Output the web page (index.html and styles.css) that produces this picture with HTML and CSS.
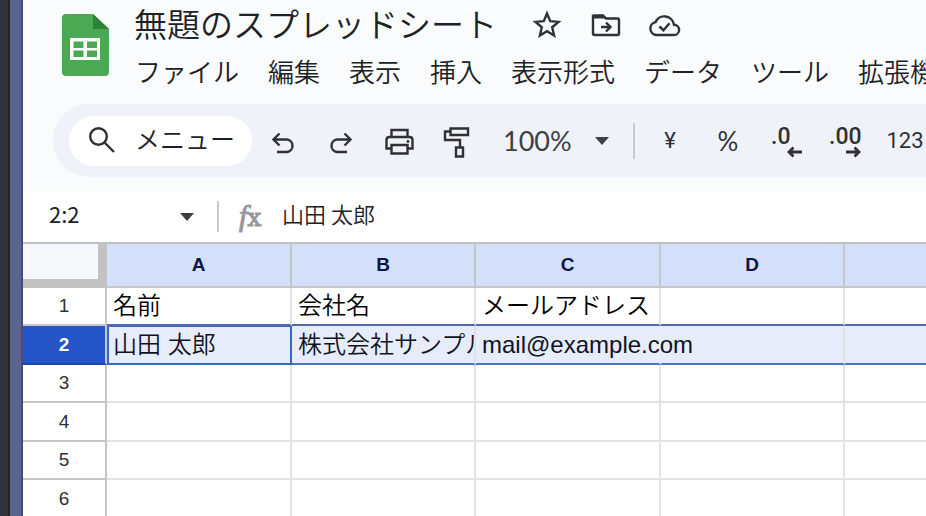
FILE: index.html
```html
<!DOCTYPE html>
<html lang="ja">
<head>
<meta charset="utf-8">
<meta name="viewport" content="width=device-width, initial-scale=1">
<title>無題のスプレッドシート</title>
<link rel="stylesheet" href="styles.css">
</head>
<body>
<div class="window">
  <header class="header">
    <div class="masthead">
      <svg class="logo" viewBox="0 0 47 62" aria-hidden="true">
        <path fill="#4aa952" d="M4 0H31L47 15V58Q47 62 43 62H4Q0 62 0 58V4Q0 0 4 0Z"/>
        <path fill="#2e8236" d="M31 0L47 15H31Z"/>
        <path fill="#fff" fill-rule="evenodd" d="M8 24H38V46H8ZM11.500 27.500V34H21.500V27.500ZM25 27.500V34H35V27.500ZM11.500 36.500V43H21.500V36.500ZM25 36.500V43H35V36.500Z"/>
      </svg>
      <div class="heading">
        <div class="title-row">
          <h1 class="title">無題のスプレッドシート</h1>
          <button class="icon-button" aria-label="スター">
            <svg class="icon" viewBox="0 0 32 32"><path d="M16 4.500L19.200 12.200L27.500 12.900L21.200 18.300L23.100 26.500L16 22.200L8.900 26.500L10.800 18.300L4.500 12.900L12.800 12.200Z"/></svg>
          </button>
          <button class="icon-button" aria-label="移動">
            <svg class="icon" viewBox="0 0 32 32"><path d="M4 7V24.500Q4 26 5.500 26H28.500Q30 26 30 24.500V11Q30 9.500 28.500 9.500H17L14 6.500Z"/><path class="solid" d="M4 5.500H14L18 9.500H4Z"/><path d="M12 18H21M17 13.500L21.500 18L17 22.500"/></svg>
          </button>
          <button class="icon-button" aria-label="保存状態">
            <svg class="icon cloud" viewBox="0 0 34 32"><path d="M9 26H27A5 5 0 0 0 27 15.800A9.700 9.700 0 0 0 8.500 13.200A6.500 6.500 0 0 0 9 26Z"/><path d="M12.500 17.500L16.500 21.200L22.500 14.200"/></svg>
          </button>
        </div>
        <nav class="menus">
          <button>ファイル</button>
          <button>編集</button>
          <button>表示</button>
          <button>挿入</button>
          <button>表示形式</button>
          <button>データ</button>
          <button>ツール</button>
          <button>拡張機能</button>
        </nav>
      </div>
    </div>
    <div class="toolbar">
      <label class="search">
        <svg class="icon" viewBox="0 0 32 32"><circle cx="11.500" cy="11.500" r="8.300"/><path d="M17.500 17.500L27 27"/></svg>
        <input type="text" placeholder="メニュー" aria-label="メニュー">
      </label>
      <button class="tool" aria-label="元に戻す">
        <svg class="icon" viewBox="0 0 32 32"><path d="M10 27H20A6.300 6.300 0 0 0 20 14.500H7M12.500 8.500L6.500 14.500L12.500 20.500"/></svg>
      </button>
      <button class="tool" aria-label="やり直し">
        <svg class="icon" viewBox="0 0 32 32"><path d="M22 27H12A6.300 6.300 0 0 1 12 14.500H25M19.500 8.500L25.500 14.500L19.500 20.500"/></svg>
      </button>
      <button class="tool" aria-label="印刷">
        <svg class="icon" viewBox="0 0 32 32"><path d="M8.500 12V5H24.500V12M8.500 23.500H3.500V15Q3.500 12 6.500 12H26.500Q29.500 12 29.500 15V23.500H24.500M8.500 20H24.500V28.500H8.500Z"/><circle class="solid" cx="25" cy="16.500" r="1.400"/></svg>
      </button>
      <button class="tool" aria-label="書式を貼り付け">
        <svg class="icon" viewBox="0 0 32 32"><path d="M9.500 3.500H27V10H9.500ZM9.500 6.500H4V15H19V22.500M15 22.500H22V31.500H15Z"/></svg>
      </button>
      <label class="zoom">
        <select aria-label="ズーム"><option>100%</option></select>
        <svg class="caret" viewBox="0 0 14 8"><path d="M0 0H14L7 8Z"/></svg>
      </label>
      <span class="divider"></span>
      <button class="tool format">¥</button>
      <button class="tool format percent">%</button>
      <button class="tool decimal">.0<svg class="arrow" viewBox="0 0 16 12"><path d="M15 6H2M6.500 1.500L2 6L6.500 10.500"/></svg></button>
      <button class="tool decimal">.00<svg class="arrow" viewBox="0 0 16 12"><path d="M1 6H14M9.500 1.500L14 6L9.500 10.500"/></svg></button>
      <button class="tool format number">123</button>
    </div>
  </header>

  <div class="formula-bar">
    <input class="name-box" type="text" value="2:2" aria-label="名前ボックス">
    <button class="name-toggle" aria-label="範囲を選択"><svg class="caret" viewBox="0 0 14 8"><path d="M0 0H14L7 8Z"/></svg></button>
    <span class="divider"></span>
    <label class="fx" for="formula"><i>f</i>x</label>
    <input class="formula" id="formula" type="text" value="山田 太郎">
  </div>

  <main class="grid">
    <table class="sheet">
      <colgroup><col class="col-index"><col class="col-odd"><col class="col-even"><col class="col-odd"><col class="col-even"><col class="col-odd"></colgroup>
      <thead>
        <tr><td class="corner"></td><th scope="col">A</th><th scope="col">B</th><th scope="col">C</th><th scope="col">D</th><th scope="col"></th></tr>
      </thead>
      <tbody>
        <tr class="above"><th scope="row">1</th><td>名前</td><td>会社名</td><td>メールアドレス</td><td></td><td></td></tr>
        <tr class="selected"><th scope="row">2</th><td class="active">山田 太郎</td><td>株式会社サンプル</td><td class="spill">mail@example.com</td><td></td><td></td></tr>
        <tr><th scope="row">3</th><td></td><td></td><td></td><td></td><td></td></tr>
        <tr><th scope="row">4</th><td></td><td></td><td></td><td></td><td></td></tr>
        <tr><th scope="row">5</th><td></td><td></td><td></td><td></td><td></td></tr>
        <tr><th scope="row">6</th><td></td><td></td><td></td><td></td><td></td></tr>
      </tbody>
    </table>
  </main>
</div>
</body>
</html>
```
FILE: styles.css
```css
* { box-sizing: border-box; }

body {
  margin: 0;
  height: 100vh;
  overflow: hidden;
  display: flex;
  background: linear-gradient(90deg, #30333c 8px, #242326 8px 10px, #5b648f 10px 21px, #484d78 21px 23px);
  padding-left: 23px;
  font-family: "Noto Sans CJK JP", sans-serif;
  color: #202124;
}

button, input, select {
  margin: 0;
  padding: 0;
  border: 0;
  background: none;
  font: inherit;
  color: inherit;
  outline: 0;
}

.window {
  flex: 1;
  min-width: 0;
  overflow: hidden;
  background: #fff;
}

.icon {
  display: block;
  width: 32px;
  height: 32px;
  overflow: visible;
  fill: none;
  stroke: #303134;
  stroke-width: 2.4;
}

.icon .solid { fill: #303134; stroke: none; }

.icon.cloud { width: 34px; }

.header {
  background: #f9fbfd;
  padding-bottom: 14px;
}

.masthead { display: flex; height: 104px; }

.logo {
  flex: none;
  width: 47px;
  height: 62px;
  margin: 14px 25px 0 39px;
}

.heading { flex: 1; min-width: 0; }

.title-row {
  display: flex;
  align-items: center;
  gap: 26px;
  height: 50px;
}

.title {
  margin: 0 8px 0 0;
  padding-bottom: 4px;
  font-size: 33px;
  font-weight: 350;
  line-height: 46px;
  white-space: nowrap;
}

.icon-button { flex: none; }

.menus {
  display: flex;
  gap: 29px;
  padding-left: 1px;
  font-size: 26px;
  font-weight: 350;
  line-height: 42px;
  white-space: nowrap;
}

.menus button { flex: none; }

.toolbar {
  display: flex;
  align-items: center;
  height: 73px;
  margin-left: 30px;
  padding-left: 16px;
  border-radius: 36px 0 0 36px;
  background: #eff2f8;
}

.search {
  flex: none;
  display: flex;
  align-items: center;
  gap: 16px;
  width: 183px;
  height: 50px;
  margin-right: 2px;
  padding-left: 18px;
  border-radius: 25px;
  background: #fff;
}

.search input {
  width: 104px;
  padding-bottom: 6px;
  font-size: 25px;
  font-weight: 350;
}

.search input::placeholder { color: #202124; opacity: 1; }

.tool {
  flex: none;
  display: flex;
  justify-content: center;
  align-items: center;
  width: 58px;
  height: 50px;
}

.caret { width: 14px; height: 8px; fill: #3c4043; }

.zoom {
  flex: none;
  display: flex;
  align-items: center;
  gap: 22px;
  padding: 0 24px 0 17px;
}

.zoom select {
  appearance: none;
  width: 70px;
  font: 27px Lato, sans-serif;
  color: #3c4043;
}

.divider {
  flex: none;
  width: 2px;
  height: 36px;
  margin-right: 6px;
  background: #c9cccf;
}

.format { font: 22px Roboto, sans-serif; color: #303134; }
.format.percent { font-size: 26px; font-family: Lato, sans-serif; }
.format.number { width: 64px; }

.decimal {
  position: relative;
  padding: 0 14px 9px;
  justify-content: flex-start;
  font: 500 23px Roboto, sans-serif;
  color: #303134;
}

.arrow {
  position: absolute;
  right: 12px;
  bottom: 8px;
  width: 16px;
  height: 12px;
  fill: none;
  stroke: #303134;
  stroke-width: 2.8;
}

.formula-bar {
  display: flex;
  align-items: center;
  height: 53px;
  padding-left: 26px;
  border-bottom: 2px solid #bfc1c3;
  font-size: 22px;
}

.formula-bar input { padding-bottom: 8px; }

.name-box { width: 131px; }

.name-toggle { display: flex; margin-right: 23px; }

.formula-bar .divider { height: 31px; margin-right: 20px; }

.fx {
  width: 43px;
  font: 25px/30px "DejaVu Serif", serif;
  color: #96979a;
  -webkit-text-stroke: 1px #96979a;
}

.fx i { font: italic 30px/30px "Liberation Serif", serif; }

.formula { flex: 1; min-width: 0; font-weight: 350; }

.sheet {
  width: 1007px;
  table-layout: fixed;
  border-collapse: separate;
  border-spacing: 0;
}

.col-index { width: 84px; }
.col-odd { width: 185px; }
.col-even { width: 184px; }

.sheet td, .sheet th {
  padding: 0;
  border: solid #e1e2e3;
  border-width: 0 2px 2px 0;
  white-space: nowrap;
  overflow: hidden;
}

.sheet td {
  padding-left: 6px;
  font: 350 24px/36px "Liberation Sans", "Noto Sans CJK JP", sans-serif;
  color: #000;
}

.sheet th {
  font: 19px/24px "Liberation Sans", sans-serif;
  color: #303134;
  border-color: #c4c6c8;
}

.sheet thead th {
  height: 44px;
  background: #d4e0fa;
  font-weight: bold;
  color: #0b1542;
}

.sheet .corner {
  border-width: 0 9px 9px 0;
  border-color: #c2c2c2;
  background: #f7f8fb;
}

.sheet tbody tr { height: 38px; }
.sheet tbody tr:nth-child(even) { height: 39px; }

.sheet .above td { border-bottom-color: #5568ab; }

.sheet .selected td {
  background: #e7ecfa;
  border-bottom-color: #4a74c8;
  color: #10131f;
}

.sheet .selected th {
  background: #2454c7;
  border-bottom-color: #1d46ae;
  font-weight: bold;
  color: #fff;
}

.sheet .selected .active {
  border-color: #3767c5;
  box-shadow: inset 2px 1px #3767c5;
}

.sheet .selected .spill {
  overflow: visible;
  border-right-color: transparent;
}
```
